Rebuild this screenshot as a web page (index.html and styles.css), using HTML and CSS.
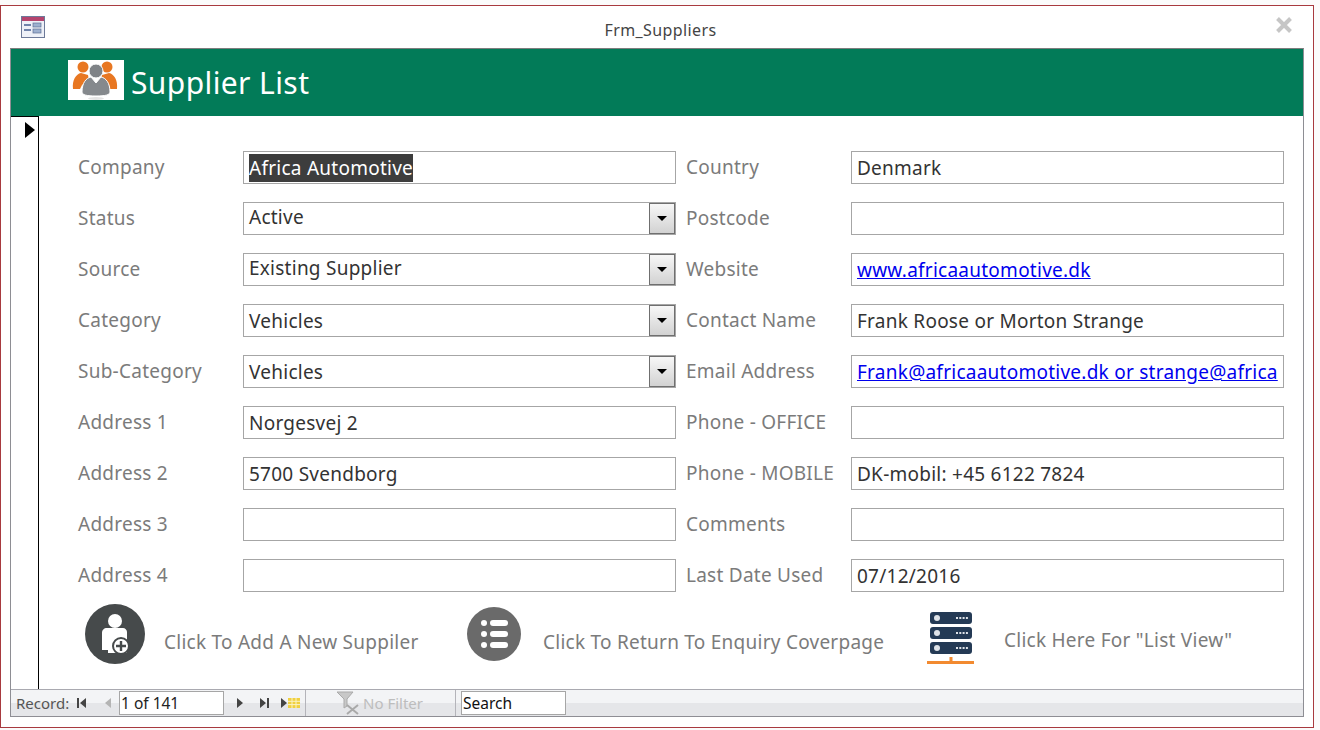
FILE: index.html
```html
<!DOCTYPE html>
<html lang="en">
<head>
	<meta charset="UTF-8">
	<title>Frm_Suppliers</title>
	<link rel="stylesheet" href="styles.css">
</head>
<body>
	<div class="window">
		<div class="titlebar">
			<svg class="form-icon" width="24" height="22" viewBox="0 0 24 22">
				<rect x="0.5" y="0.5" width="23" height="21" fill="#eef1f8" stroke="#6d7a99"/>
				<rect x="1" y="1" width="22" height="4" fill="#b5446e"/>
				<rect x="3" y="8" width="7" height="2" fill="#6f83ab"/>
				<rect x="3" y="13" width="7" height="2" fill="#6f83ab"/>
				<rect x="12" y="7" width="8" height="4" fill="#9db0cf" stroke="#5d6f94" stroke-width="0.7"/>
				<rect x="12" y="13" width="8" height="4" fill="#9db0cf" stroke="#5d6f94" stroke-width="0.7"/>
			</svg>
			<span class="title">Frm_Suppliers</span>
			<svg class="close" width="16" height="16" viewBox="0 0 16 16">
				<path d="M1.5 1.5 14.5 14.5M14.5 1.5 1.5 14.5" stroke="#c6c6c6" stroke-width="4"/>
			</svg>
		</div>

		<div class="frame">
			<header class="head">
				<div class="logo">
					<svg width="56" height="40" viewBox="0 0 56 40">
						<circle cx="15" cy="7" r="5.5" fill="#e87722"/>
						<circle cx="39" cy="7" r="5.5" fill="#e87722"/>
						<path d="M5 29C4 20 8 14 13 13L20 15 21 20 14 25 12 29Z" fill="#e87722"/>
						<path d="M49 29C50 20 46 14 41 13L34 15 33 20 40 25 42 29Z" fill="#e87722"/>
						<circle cx="28" cy="11" r="7" fill="#7f8387" stroke="white"/>
						<path d="M14 32C14 23 18 18 23 17L28 23 33 17C38 18 42 23 42 32 42 35 37 36 28 36 19 36 14 35 14 32Z" fill="#85898d" stroke="white"/>
						<ellipse cx="28" cy="38.5" rx="8" ry="1.5" fill="#e3e3e3"/>
					</svg>
				</div>
				<h1>Supplier List</h1>
			</header>

			<div class="body">
				<div class="selector">
					<svg width="10" height="16" viewBox="0 0 10 16"><path d="M0 0 10 8 0 16Z"/></svg>
				</div>
				<div class="content">
					<div class="form">
						<label>Company</label>
						<div class="field"><span class="selected">Africa Automotive</span></div>
						<label>Country</label>
						<div class="field">Denmark</div>

						<label>Status</label>
						<div class="field combo">Active<span class="arrow"></span></div>
						<label>Postcode</label>
						<div class="field"></div>

						<label>Source</label>
						<div class="field combo">Existing Supplier<span class="arrow"></span></div>
						<label>Website</label>
						<div class="field"><a href="#">www.africaautomotive.dk</a></div>

						<label>Category</label>
						<div class="field combo low">Vehicles<span class="arrow"></span></div>
						<label>Contact Name</label>
						<div class="field">Frank Roose or Morton Strange</div>

						<label>Sub-Category</label>
						<div class="field combo low">Vehicles<span class="arrow"></span></div>
						<label>Email Address</label>
						<div class="field"><a href="#">Frank@africaautomotive.dk or strange@africa</a></div>

						<label>Address 1</label>
						<div class="field">Norgesvej 2</div>
						<label>Phone - OFFICE</label>
						<div class="field"></div>

						<label>Address 2</label>
						<div class="field">5700 Svendborg</div>
						<label>Phone - MOBILE</label>
						<div class="field">DK-mobil: +45 6122 7824</div>

						<label>Address 3</label>
						<div class="field"></div>
						<label>Comments</label>
						<div class="field"></div>

						<label>Address 4</label>
						<div class="field"></div>
						<label>Last Date Used</label>
						<div class="field">07/12/2016</div>
					</div>

					<div class="actions">
						<div class="action add">
							<svg width="62" height="62" viewBox="0 0 62 62">
								<circle cx="31" cy="31" r="30" fill="#464a4b"/>
								<circle cx="31" cy="18" r="7" fill="#fff"/>
								<path d="M18 30C18 27 20 25 23 25H39C41 25 43 27 43 29V50H24V47H18Z" fill="#fff"/>
								<circle cx="37" cy="43" r="8" fill="#fff" stroke="#464a4b" stroke-width="2"/>
								<path d="M32 43H42M37 38V48" stroke="#464a4b" stroke-width="2.4"/>
							</svg>
							<span>Click To Add A New Suppiler</span>
						</div>
						<div class="action back">
							<svg width="56" height="56" viewBox="0 0 56 56">
								<circle cx="28" cy="28" r="27" fill="#6a6a6a"/>
								<g fill="#fff">
									<circle cx="18" cy="17" r="3"/>
									<circle cx="18" cy="28" r="3"/>
									<circle cx="18" cy="39" r="3"/>
									<rect x="24" y="14" width="18" height="6" rx="3"/>
									<rect x="24" y="25" width="18" height="6" rx="3"/>
									<rect x="24" y="36" width="18" height="6" rx="3"/>
								</g>
							</svg>
							<span>Click To Return To Enquiry Coverpage</span>
						</div>
						<div class="action list">
							<svg width="48" height="54" viewBox="0 0 48 54">
								<g fill="#243a55">
									<rect x="3" y="0" width="42" height="12" rx="3"/>
									<rect x="3" y="15" width="42" height="12" rx="3"/>
									<rect x="3" y="30" width="42" height="12" rx="3"/>
								</g>
								<rect x="22.5" y="45" width="3" height="4" fill="#f28a30"/>
								<rect x="0" y="49" width="47" height="3" fill="#f28a30"/>
								<g fill="#dfe3e8">
									<circle cx="10" cy="6" r="3"/>
									<circle cx="10" cy="21" r="3"/>
									<circle cx="10" cy="36" r="3"/>
								</g>
								<path d="M29 6H41M29 21H41M29 36H41" stroke="#dfe3e8" stroke-width="2" stroke-dasharray="2 1.3"/>
							</svg>
							<span>Click Here For "List View"</span>
						</div>
					</div>
				</div>
			</div>

			<footer class="nav">
				<span class="rec">Record:</span>
				<svg class="nav-btn" width="11" height="10" viewBox="0 0 11 10"><path d="M1 0H3V10H1ZM10 0V10L4 5Z" fill="#444"/></svg>
				<svg class="nav-btn prev" width="8" height="10" viewBox="0 0 8 10"><path d="M7 0V10L1 5Z" fill="#b4b4b4"/></svg>
				<div class="pos">1 of 141</div>
				<svg class="nav-btn next" width="8" height="10" viewBox="0 0 8 10"><path d="M1 0V10L7 5Z" fill="#444"/></svg>
				<svg class="nav-btn last" width="11" height="10" viewBox="0 0 11 10"><path d="M1 0V10L7 5ZM8 0H10V10H8Z" fill="#444"/></svg>
				<svg class="nav-btn new" width="20" height="10" viewBox="0 0 20 10">
					<path d="M0 0V10L6 5Z" fill="#444"/>
					<rect x="7" y="0" width="12" height="10" fill="#f0d040"/>
					<path d="M11 0V10M15 0V10M7 3.3H19M7 6.6H19" stroke="#fbf3c4"/>
				</svg>
				<div class="sep filter">
					<svg width="24" height="24" viewBox="0 0 24 24">
						<path d="M1 1H17L11 8V15L8 17V8Z" fill="#c8c8c8" stroke="#aaa"/>
						<path d="M11 14 22 23M22 14 11 23" stroke="#a9a9a9" stroke-width="2"/>
					</svg>
					<span>No Filter</span>
				</div>
				<div class="sep search"><div class="box">Search</div></div>
			</footer>
		</div>
	</div>
</body>
</html>
```

FILE: styles.css
```css
*{
	margin: 0;
	padding: 0;
	box-sizing: border-box;
}
html, body{
	height: 100%;
	overflow: hidden;
}
body{
	font: 19px 'Noto Sans', 'Open Sans', sans-serif;
	letter-spacing: 0.25px;
	background-color: #fbfbfb;
	padding-top: 5px;
}
.window{
	width: 1314px;
	height: 723px;
	background-color: white;
	border: 1px solid #a83a3f;
	padding: 0 9px 10px 9px;
	display: flex;
	flex-direction: column;
}
.titlebar{
	height: 42px;
	flex: none;
	display: flex;
	align-items: center;
	justify-content: center;
	position: relative;
}
.form-icon{
	position: absolute;
	left: 11px;
	top: 10px;
}
.close{
	position: absolute;
	right: 12px;
	top: 11px;
}
.title{
	font-size: 16px;
	letter-spacing: 0.4px;
	color: #444;
	margin-top: 5px;
	margin-left: 7px;
}
.frame{
	flex: 1;
	display: flex;
	flex-direction: column;
	border: 1px solid #8e8e94;
	border-top-color: #7d7d7d;
	min-height: 0;
}
.head{
	height: 67px;
	flex: none;
	background-color: #027b58;
	display: flex;
	align-items: flex-start;
	padding: 11px 0 0 57px;
	color: white;
}
.logo{
	width: 56px;
	height: 40px;
	background-color: white;
	display: flex;
}
.head h1{
	font-size: 30px;
	font-weight: 400;
	letter-spacing: 0.4px;
	line-height: 46px;
	margin-left: 7px;
}
.body{
	flex: 1;
	display: flex;
	min-height: 0;
}
.selector{
	width: 28px;
	flex: none;
	border-top: 1px solid black;
	border-right: 1px solid black;
	padding: 5px 0 0 14px;
}
.selector svg{
	display: block;
}
.content{
	flex: 1;
	padding: 35px 19px 0 39px;
}
.form{
	display: grid;
	grid-template-columns: 165px 433px 175px 433px;
	grid-auto-rows: 33px;
	row-gap: 18px;
}
.form label{
	color: #7b7b7b;
	line-height: 33px;
	white-space: nowrap;
}
.form label:nth-child(4n+3){
	padding-left: 10px;
}
.field{
	border: 1px solid #a6a6a6;
	color: #333;
	line-height: 33px;
	padding-left: 5px;
	white-space: nowrap;
	overflow: hidden;
	position: relative;
}
.field a{
	color: #0000ee;
}
.selected{
	background-color: #3d3d3d;
	color: white;
	display: inline-block;
	line-height: 28px;
	margin-top: 2px;
	vertical-align: top;
}
.combo{
	line-height: 28px;
}
.low{
	line-height: 32px;
}
.arrow{
	position: absolute;
	right: 0;
	top: 0;
	width: 26px;
	height: 31px;
	border: 1px solid #6f6f6f;
	background: linear-gradient(#f7f7f7, #d2d2d2);
}
.arrow::after{
	content: '';
	position: absolute;
	left: 7px;
	top: 12px;
	border: 5px solid transparent;
	border-top: 5px solid black;
	border-bottom: 0;
}
.actions{
	display: flex;
	align-items: center;
	height: 62px;
	margin-top: 11px;
	color: #7b7b7b;
}
.action{
	display: flex;
	align-items: center;
	flex: none;
}
.add{
	margin-left: 6px;
	width: 382px;
}
.add span{
	margin-left: 18px;
	margin-top: 16px;
}
.back{
	width: 461px;
}
.back span{
	margin-left: 21px;
	margin-top: 16px;
}
.list svg{
	margin-top: 10px;
}
.list span{
	margin-left: 29px;
	margin-top: 12px;
}
.nav{
	height: 27px;
	flex: none;
	border-top: 1px solid #a9a9b0;
	background: linear-gradient(#f3f4f6 50%, #e5e6e9 50%);
	display: flex;
	align-items: center;
	font-size: 15px;
	letter-spacing: 0;
	color: #555;
	padding-left: 5px;
}
.rec{
	width: 60px;
}
.nav-btn{
	flex: none;
}
.prev{
	margin: 0 7px 0 17px;
}
.pos{
	width: 105px;
	height: 24px;
	background-color: white;
	border: 1px solid #a6a6a6;
	color: #222;
	font-size: 15.5px;
	line-height: 22px;
	padding-left: 1px;
}
.next{
	margin-left: 12px;
}
.last{
	margin-left: 15px;
}
.new{
	margin-left: 11px;
}
.sep{
	height: 100%;
	border-left: 1px solid #b4b4ba;
	display: flex;
	align-items: center;
}
.filter{
	width: 150px;
	margin-left: 4px;
	padding-left: 30px;
	color: #bdbdbd;
}
.filter span{
	margin-left: 3px;
}
.search{
	padding-left: 5px;
}
.box{
	width: 105px;
	height: 24px;
	background-color: white;
	border: 1px solid #a6a6a6;
	color: #111;
	font-size: 15.5px;
	line-height: 22px;
	padding-left: 1px;
}
```
